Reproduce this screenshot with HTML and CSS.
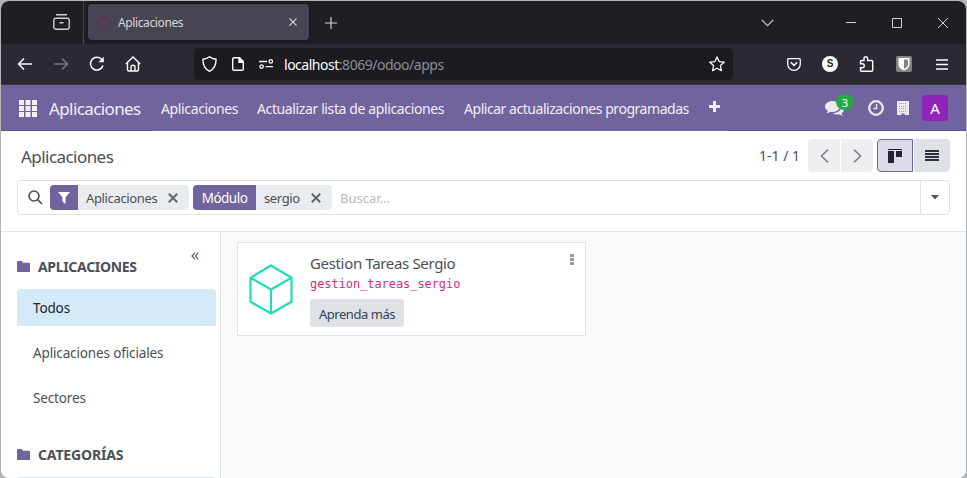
FILE: index.html
```html
<!DOCTYPE html>
<html lang="es">
<head>
<meta charset="utf-8">
<title>Aplicaciones</title>
<link rel="stylesheet" href="styles.css">
</head>
<body>
<div class="window">
  <header class="tabbar">
    <div class="tabbar-left">
      <svg width="17" height="16" viewBox="0 0 17 16" fill="none" stroke="#cfcfd4" stroke-width="1.4"><path d="M3 .8h11M.8 6.2a2 2 0 0 1 2-2h11.4a2 2 0 0 1 2 2v7a2 2 0 0 1-2 2H2.800a2 2 0 0 1-2-2zM6.500 8.800h4"/></svg>
    </div>
    <div class="tab">
      <span class="ring"></span>
      <span class="tab-title">Aplicaciones</span>
      <svg class="tab-close" width="8" height="8" viewBox="0 0 8 8" stroke="#cfcfd4" stroke-width="1.200"><path d="M.4.4l7.200 7.200M7.600.4L.4 7.600"/></svg>
    </div>
    <svg class="tab-new" width="12" height="12" viewBox="0 0 12 12" stroke="#d0d0d4" stroke-width="1.200"><path d="M6 0v12M0 6h12"/></svg>
    <div class="win-controls">
      <svg width="13" height="8" viewBox="0 0 13 8" fill="none" stroke="#bdbdc2" stroke-width="1.300"><path d="M.7.8l5.800 5.800L12.300.8"/></svg>
      <svg width="10" height="10" viewBox="0 0 10 10" stroke="#d0d0d4"><path d="M0 4.500h10"/></svg>
      <svg width="10" height="10" viewBox="0 0 10 10" fill="none" stroke="#d0d0d4"><path d="M.5.5h9v9h-9z"/></svg>
      <svg width="10" height="10" viewBox="0 0 10 10" stroke="#d0d0d4"><path d="M0 0l10 10M10 0L0 10"/></svg>
    </div>
  </header>

  <div class="toolbar">
    <div class="nav-buttons">
      <svg width="16" height="14" viewBox="0 0 16 14" fill="none" stroke="#fbfbfe" stroke-width="1.500"><path d="M15 7H1.500M7 1.500L1.500 7 7 12.500"/></svg>
      <svg width="16" height="14" viewBox="0 0 16 14" fill="none" stroke="#77767e" stroke-width="1.500"><path d="M1 7h13.500M9 1.500L14.500 7 9 12.500"/></svg>
      <svg width="16" height="16" viewBox="0 0 16 16" fill="none" stroke="#fbfbfe" stroke-width="1.500"><path d="M14 9.500A6.400 6.400 0 1 1 13 3.800"/><path d="M14.800.8v5.400H9.400z" fill="#fbfbfe" stroke="none"/></svg>
      <svg width="16" height="16" viewBox="0 0 16 16" fill="none" stroke="#fbfbfe" stroke-width="1.400"><path d="M.8 8L8 1l7.200 7M2.500 6.800v6.700a1.500 1.500 0 0 0 1.500 1.500h8a1.500 1.500 0 0 0 1.500-1.500V6.800M6 15v-3.800a2 2 0 0 1 4 0V15"/></svg>
    </div>
    <div class="urlbar">
      <svg class="ic-shield" width="15" height="16" viewBox="0 0 15 16" fill="none" stroke="#fbfbfe" stroke-width="1.400"><path d="M7.500.8C5.800 2.200 3.500 2.900.9 3.300c0 5.500 1.600 9.700 6.600 12 5-2.300 6.600-6.500 6.600-12C11.500 2.900 9.200 2.200 7.500.8z"/></svg>
      <svg class="ic-page" width="12" height="14" viewBox="0 0 12 14" fill="none" stroke="#fbfbfe" stroke-width="1.400"><path d="M2 .7h5.500l3.800 3.800V12a1.300 1.300 0 0 1-1.300 1.300H2A1.300 1.300 0 0 1 .7 12V2A1.300 1.300 0 0 1 2 .7z"/><path d="M7 .7v4.600h4.500z" fill="#fbfbfe"/></svg>
      <svg class="ic-perm" width="15" height="10" viewBox="0 0 15 10" fill="none" stroke="#fbfbfe" stroke-width="1.300"><path d="M0 2.500h8M6.500 7.700H14"/><circle cx="11.800" cy="2.400" r="1.700"/><circle cx="2.600" cy="7.600" r="1.700"/></svg>
      <span class="url"><b>localhost</b>:8069/odoo/apps</span>
      <svg class="ic-star" width="16" height="16" viewBox="0 0 16 16" fill="none" stroke="#fbfbfe" stroke-width="1.300" stroke-linejoin="round"><path d="M8 .9l2.100 4.700 5.100.6-3.800 3.400 1 5.100L8 12.200l-4.400 2.500 1-5.100L.8 6.200l5.100-.6z"/></svg>
    </div>
    <div class="extensions">
      <svg width="14" height="13" viewBox="0 0 14 13" fill="none" stroke="#fbfbfe" stroke-width="1.300"><path d="M1.700.7h10.600a1 1 0 0 1 1 1V6A6.300 6.300 0 0 1 .7 6V1.700a1 1 0 0 1 1-1z"/><path d="M3.800 4.300L7 7.400l3.200-3.100" stroke-width="1.500"/></svg>
      <span class="ext-s">S</span>
      <svg class="puzzle" width="15" height="16" viewBox="0 0 15 16" fill="none" stroke="#fbfbfe" stroke-width="1.400"><path d="M1.500 7.800V5.500a1 1 0 0 1 1-1H5V2.600a1.800 1.800 0 0 1 3.600 0v1.900h4.100a1 1 0 0 1 1 1v8.700a1 1 0 0 1-1 1H2.500a1 1 0 0 1-1-1v-2.500h1.800a1.900 1.900 0 0 0 0-3.900z"/></svg>
      <svg width="16" height="16" viewBox="0 0 16 16"><rect width="16" height="16" rx="2" fill="#85837f"/><path d="M2.500 2h11v6.500c0 3-2.500 4.700-5.500 6-3-1.300-5.500-3-5.500-6z" fill="#fff"/><path d="M8 3.500h4v5c0 2-1.800 3.300-4 4.400z" fill="#85837f"/></svg>
      <svg class="hamburger" width="12" height="11" viewBox="0 0 12 11" stroke="#fbfbfe" stroke-width="1.300"><path d="M0 1h12M0 5.500h12M0 10h12"/></svg>
    </div>
  </div>

  <nav class="navbar">
    <svg class="grid-icon" width="18" height="17" viewBox="0 0 18 17" fill="#f3f0f7"><path d="M0 0h5v5H0zM6.500 0h5v5h-5zM13 0h5v5h-5zM0 6h5v5H0zM6.500 6h5v5h-5zM13 6h5v5h-5zM0 12h5v5H0zM6.500 12h5v5h-5zM13 12h5v5h-5z"/></svg>
    <span class="brand">Aplicaciones</span>
    <span class="menu m1">Aplicaciones</span>
    <span class="menu m2">Actualizar lista de aplicaciones</span>
    <span class="menu m3">Aplicar actualizaciones programadas</span>
    <svg class="plus" width="11" height="11" viewBox="0 0 11 11" fill="#f3f0f7"><path d="M4 0h3v4h4v3H7v4H4V7H0V4h4z"/></svg>
    <div class="systray">
      <div class="chat">
        <svg width="19" height="15" viewBox="0 0 19 15" fill="#ece8f2"><path d="M7.500 0C11.500 0 15 2.400 15 5.500S11.500 11 7.500 11c-.7 0-1.300 0-1.900-.2C4.300 11.700 3 12.200 1.300 12.300c.7-.7 1.300-1.500 1.500-2.600C1 8.700 0 7.200 0 5.500 0 2.400 3.400 0 7.500 0z"/><path d="M16.300 4.700C17.900 5.500 19 6.800 19 8.300c0 1.600-1 3-2.500 3.900.2 1 .7 1.800 1.400 2.500-1.600-.1-2.900-.6-4.100-1.400-2 .3-4.500 0-6-1.100 4.700 0 8.700-2.900 8.500-7.500z"/></svg>
        <span class="badge">3</span>
      </div>
      <svg class="clock" width="16" height="16" viewBox="0 0 16 16" fill="none" stroke="#ece8f2"><circle cx="8" cy="8" r="6.800" stroke-width="2.300"/><path d="M8.500 4v4.600H5.500" stroke-width="1.500"/></svg>
      <svg class="building" width="12" height="14" viewBox="0 0 12 14"><path d="M0 0h12v14H7.500v-1.500h-3V14H0z" fill="#ece8f2"/><path d="M2 2.500h8M2 5.500h8M2 7.500h8M2 10.500h8" stroke="#a79bc3" stroke-dasharray="1 1"/></svg>
      <span class="avatar">A</span>
    </div>
  </nav>

  <section class="control-panel">
    <div class="cp-top">
      <h1>Aplicaciones</h1>
      <span class="pager">1-1 / 1</span>
      <div class="pager-buttons">
        <button><svg width="9" height="14" viewBox="0 0 9 14" fill="none" stroke="#84878b" stroke-width="1.700"><path d="M8 .7L1.500 7 8 13.300"/></svg></button>
        <button><svg width="9" height="14" viewBox="0 0 9 14" fill="none" stroke="#84878b" stroke-width="1.700"><path d="M1 .7L7.500 7 1 13.300"/></svg></button>
      </div>
      <div class="view-switch">
        <button class="active"><svg width="14" height="14" viewBox="0 0 14 14" fill="#21252d"><path d="M0 0h14v1H0zM0 2h6v12H0zM8 2h6v6H8z"/></svg></button>
        <button><svg width="14" height="11" viewBox="0 0 14 11" fill="#2c3037"><path d="M0 0h14v2H0zM0 3h14v2H0zM0 6h14v2H0zM0 9h14v2H0z"/></svg></button>
      </div>
    </div>
    <div class="search">
      <svg class="lens" width="15" height="15" viewBox="0 0 15 15" fill="none" stroke="#495057" stroke-width="1.600"><circle cx="6" cy="6" r="5"/><path d="M9.600 9.600L14 14"/></svg>
      <div class="facet f1">
        <span class="facet-label"><svg width="12" height="12" viewBox="0 0 12 12" fill="#fff"><path d="M0 0h12L7.500 5.300V12L4.500 9.500V5.300z"/></svg></span>
        <span class="facet-value">Aplicaciones</span>
        <svg class="x" width="10" height="10" viewBox="0 0 10 10" stroke="#5f676f" stroke-width="2"><path d="M.8.8l8.400 8.400M9.200.8L.8 9.200"/></svg>
      </div>
      <div class="facet f2">
        <span class="facet-label">Módulo</span>
        <span class="facet-value">sergio</span>
        <svg class="x" width="10" height="10" viewBox="0 0 10 10" stroke="#5f676f" stroke-width="2"><path d="M.8.8l8.400 8.400M9.200.8L.8 9.200"/></svg>
      </div>
      <span class="placeholder">Buscar...</span>
      <span class="dropdown"><svg width="8" height="5" viewBox="0 0 8 5" fill="#495057"><path d="M0 0h8L4 4.600z"/></svg></span>
    </div>
  </section>

  <main class="content">
    <aside class="sidebar">
      <div class="section-head">
        <svg width="13" height="11" viewBox="0 0 13 11" fill="#71639e"><path d="M1 0h3.600a1 1 0 0 1 1 1v.8H12a1 1 0 0 1 1 1V10a1 1 0 0 1-1 1H1a1 1 0 0 1-1-1V1a1 1 0 0 1 1-1z"/></svg>
        <span>APLICACIONES</span>
        <svg class="collapse" width="8" height="8" viewBox="0 0 8 8" fill="none" stroke="#565d66" stroke-width="1.200"><path d="M4 .6L1 4l3 3.400M7.400.6L4.400 4l3 3.400"/></svg>
      </div>
      <ul>
        <li class="selected">Todos</li>
        <li>Aplicaciones oficiales</li>
        <li>Sectores</li>
      </ul>
      <div class="section-head second">
        <svg width="13" height="11" viewBox="0 0 13 11" fill="#71639e"><path d="M1 0h3.600a1 1 0 0 1 1 1v.8H12a1 1 0 0 1 1 1V10a1 1 0 0 1-1 1H1a1 1 0 0 1-1-1V1a1 1 0 0 1 1-1z"/></svg>
        <span>CATEGORÍAS</span>
      </div>
      <div class="next-item"></div>
    </aside>
    <div class="kanban">
      <article class="card">
        <svg class="cube" width="44" height="51" viewBox="0 0 44 51" fill="none" stroke="#21dbc0" stroke-width="2.200" stroke-linejoin="round"><path d="M22 1.500L42.500 13.700v24.100L22 49.500 1.500 37.800V13.700zM1.500 13.700L22 25.500l20.500-11.800M22 25.500v24"/></svg>
        <div class="card-body">
          <h2>Gestion Tareas Sergio</h2>
          <code>gestion_tareas_sergio</code>
          <button class="learn">Aprenda más</button>
        </div>
        <svg class="dots" width="4" height="12" viewBox="0 0 4 12" fill="#989a9e"><path d="M0 0h4v3H0zM0 4h4v3H0zM0 8h4v3H0z"/></svg>
      </article>
    </div>
  </main>
</div>
</body>
</html>
```
FILE: styles.css
```css
* { box-sizing: border-box; margin: 0; padding: 0; }
html, body { height: 478px; overflow: hidden; }
body { background: #b4b4b4; padding: 1px 1px 0; font-family: "Noto Sans", "Open Sans", sans-serif; font-size: 14px; color: #495057; }
svg { display: block; flex: none; }
button { border: 0; font: inherit; color: inherit; }
span, h1, h2 { white-space: nowrap; }
.window { height: 477px; border-radius: 8px; overflow: hidden; background: #fff; display: flex; flex-direction: column; }

.tabbar { height: 43px; flex: none; background: #1f1e25; display: flex; align-items: center; }
.tabbar-left { width: 83px; height: 43px; padding: 13px 0 0 52px; border-right: 1px solid #47464d; }
.tab { width: 221px; height: 36px; margin: 0 0 1px 4px; background: #484553; border-radius: 4px; box-shadow: 0 0 3px #0008; display: flex; align-items: center; padding: 0 12px 0 9px; }
.ring { width: 14px; height: 14px; border: 3px solid #59384f; border-radius: 50%; }
.tab-title { margin-left: 7px; font-size: 12px; letter-spacing: -.38px; color: #d6d5da; }
.tab-close { margin-left: auto; }
.tab-new { margin-left: 16px; }
.win-controls { margin-left: auto; display: flex; align-items: center; padding-right: 18px; }
.win-controls svg + svg { margin-left: 36px; }
.win-controls svg:nth-child(2) { margin-left: 72px; }

.toolbar { height: 41px; flex: none; background: #2b2a33; border-bottom: 1px solid #38373f; display: flex; align-items: center; }
.nav-buttons { display: flex; align-items: center; gap: 20px; width: 193px; padding-left: 16px; }
.urlbar { width: 539px; height: 32px; background: #1c1b22; border-radius: 4px; display: flex; align-items: center; padding: 0 8px; }
.ic-page { margin-left: 15px; }
.ic-perm { margin-left: 15px; }
.url { margin: 1px 0 0 10px; font-size: 14px; letter-spacing: -.48px; color: #8e8d94; }
.url b { color: #fbfbfe; font-weight: 400; }
.ic-star { margin-left: auto; }
.extensions { margin-left: auto; display: flex; align-items: center; gap: 21px; padding-right: 18px; }
.extensions .hamburger { margin-left: 3px; }
.ext-s { width: 16px; height: 16px; border-radius: 50%; background: #fff; color: #24232b; font: bold 10px/16px "Liberation Sans", sans-serif; text-align: center; }
.extensions .puzzle { margin: 0 1px 0 0; }

.navbar { height: 46px; flex: none; background: linear-gradient(90deg, #5d4f88 150px, #71639e 150px 728px, #5d4f88 728px) bottom / 100% 1px no-repeat #71639e; color: #f1eef6; display: flex; align-items: center; }
.grid-icon { margin-left: 18px; }
.brand { width: 112px; margin: 1px 0 0 12px; font-size: 17px; letter-spacing: -.6px; }
.menu { font-size: 14px; margin-top: 1px; }
.m1 { width: 96px; letter-spacing: -.36px; }
.m2 { width: 207px; letter-spacing: -.38px; }
.m3 { width: 245px; letter-spacing: -.46px; }
.plus { margin-bottom: 3px; }
.systray { margin-left: auto; display: flex; align-items: center; padding-right: 18px; }
.chat { position: relative; width: 43px; }
.badge { position: absolute; left: 11px; top: -7px; width: 18px; height: 16px; border-radius: 8px; background: #28a745; color: #fff; font-size: 11px; line-height: 17px; text-align: center; }
.building { margin: 0 13px; }
.avatar { width: 26px; height: 26px; border-radius: 3px; background: #8e24b8; color: #fff; text-align: center; font-size: 15px; line-height: 26px; }

.control-panel { height: 101px; flex: none; border-bottom: 1px solid #dee2e6; padding: 8px 16px 0; }
.cp-top { display: flex; align-items: center; height: 33px; }
h1 { flex: 1; padding: 2px 0 0 4px; font-size: 17px; font-weight: 400; letter-spacing: -.55px; }
.pager { width: 49px; font-size: 14px; }
.pager-buttons { display: flex; gap: 1px; }
.pager-buttons button { width: 32px; height: 33px; background: #eeeff1; display: flex; align-items: center; justify-content: center; }
.pager-buttons button:first-child, .view-switch button:first-child { border-radius: 4px 0 0 4px; }
.pager-buttons button:last-child, .view-switch button:last-child { border-radius: 0 4px 4px 0; }
.view-switch { display: flex; gap: 1px; margin-left: 4px; }
.view-switch button { width: 36px; height: 33px; background: #dee2e6; display: flex; align-items: center; justify-content: center; }
.view-switch .active { background: #dedae8; border: 1px solid #71639e; }
.search { height: 35px; margin-top: 8px; border: 1px solid #dee2e6; border-radius: 4px; display: flex; align-items: center; padding-left: 10px; }
.facet { height: 25px; border-radius: 4px; background: #e9ecef; overflow: hidden; display: flex; align-items: center; font-size: 13px; }
.f1 { width: 139px; margin-left: 7px; }
.f2 { width: 139px; margin-left: 4px; }
.facet-label { height: 25px; line-height: 24px; background: #71639e; color: #fff; display: flex; align-items: center; justify-content: center; }
.f1 .facet-label { width: 28px; }
.f2 .facet-label { width: 63px; font-size: 13.500px; letter-spacing: -.5px; }
.facet-value { margin-left: 8px; letter-spacing: -.36px; }
.x { margin: 0 11px 0 auto; }
.placeholder { margin-left: 8px; color: #b5bac1; font-size: 13px; }
.dropdown { margin-left: auto; width: 29px; height: 33px; border-left: 1px solid #dee2e6; display: flex; align-items: center; justify-content: center; }

.content { flex: 1; display: flex; min-height: 0; }
.sidebar { width: 220px; border-right: 1px solid #dee2e6; padding: 22px 4px 0 16px; overflow: hidden; }
.section-head { display: flex; align-items: center; height: 24px; color: #495057; font-weight: 700; font-size: 14px; letter-spacing: -.32px; }
.section-head span { margin-left: 8px; }
.collapse { margin: -21px 17px 0 auto; }
ul { list-style: none; margin-top: 11px; }
li { height: 37px; margin-bottom: 8px; padding-left: 16px; display: flex; align-items: center; font-size: 13.500px; letter-spacing: -.14px; }
.selected { background: #d4eaf8; border-radius: 4px 4px 0 0; color: #212529; }
.second { margin-top: 26px; letter-spacing: -.15px; }
.next-item { height: 37px; margin-top: 11px; background: #d4eaf8; border-radius: 4px 4px 0 0; }
.kanban { flex: 1; background: #f8f9fb; padding: 10px 16px; }
.card { width: 349px; height: 94px; background: #fff; border: 1px solid #dee2e6; display: flex; padding: 11px; }
.cube { margin-top: 10px; }
.card-body { margin-left: 17px; flex: 1; }
h2 { margin-top: -1px; font-size: 15px; line-height: 20px; font-weight: 400; letter-spacing: -.34px; }
code { display: block; margin-top: 1px; color: #d12c82; font: 11.900px/20px "DejaVu Sans Mono", "Liberation Mono", monospace; }
.learn { display: block; width: 94px; height: 28px; margin-top: 5px; padding-top: 1px; border-radius: 3px; background: #dee2e6; color: #374151; font-size: 13px; letter-spacing: -.45px; }
```
